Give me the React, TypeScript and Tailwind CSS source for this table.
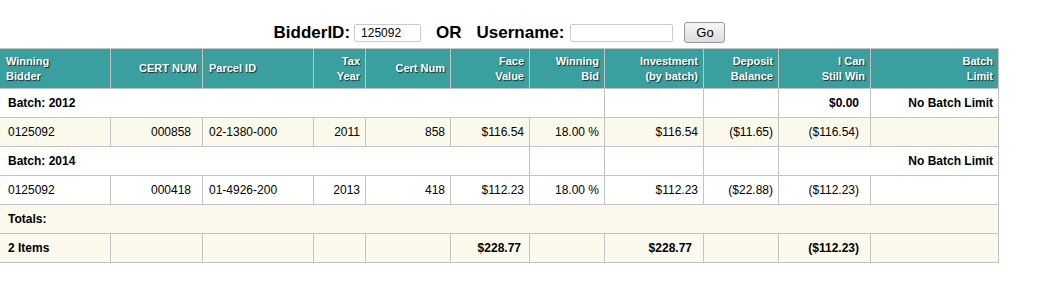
import type { ReactNode } from "react";

type CellProps = {
  children?: ReactNode;
  className?: string;
};

function Th({ children, className = "" }: CellProps) {
  return (
    <div
      className={`h-[40px] flex items-center border-r border-b border-[#c3c3c3] bg-[#3a9f9f] text-white font-bold text-[11px] leading-[15px] [text-shadow:1px_1px_1px_rgba(0,0,0,0.7)] ${className}`}
    >
      {children}
    </div>
  );
}

function Td({ children, className = "" }: CellProps) {
  return (
    <div
      className={`h-[29px] flex items-center border-r border-b border-[#c3c3c3] text-[12px] text-black ${className}`}
    >
      {children}
    </div>
  );
}

const neg = "text-[#45204a]";

export default function App() {
  return (
    <div className="min-h-screen bg-white font-['Liberation_Sans',Arial,sans-serif]">
      <div className="w-[999px]">
        {/* lookup form */}
        <div className="h-[48px] pt-[22px]">
          <div className="flex h-[21px] items-center justify-center text-black leading-[21px]">
            <span className="text-[17px] font-bold">BidderID:</span>
            <input
              defaultValue="125092"
              className="ml-[4px] w-[67px] h-[18px] border border-[#c9ccd2] rounded-[2px] pl-[6px] text-[12px] leading-[16px] outline-none"
            />
            <span className="ml-[15px] text-[17px] font-bold">OR</span>
            <span className="ml-[15px] text-[17px] font-bold">Username:</span>
            <input className="ml-[6px] w-[103px] h-[18px] border border-[#c9ccd2] rounded-[2px] pl-[6px] text-[12px] leading-[16px] outline-none" />
            <button className="ml-[11px] w-[41px] h-[21px] rounded-[3px] border border-[#9a9a9a] bg-gradient-to-b from-[#f7f7f7] to-[#dcdcdc] text-[13px] leading-none">
              Go
            </button>
          </div>
        </div>

        {/* winnings table */}
        <div className="grid grid-cols-[111px_92px_111px_52px_85px_79px_75px_99px_75px_92px_128px] border-t border-[#c3c3c3]">
          <Th className="pl-[6px]">Winning<br />Bidder</Th>
          <Th className="justify-end pr-[5px]">CERT NUM</Th>
          <Th className="pl-[6px]">Parcel ID</Th>
          <Th className="justify-end text-right pr-[5px]">Tax<br />Year</Th>
          <Th className="justify-end pr-[5px]">Cert Num</Th>
          <Th className="justify-end text-right pr-[5px]">Face<br />Value</Th>
          <Th className="justify-end text-right pr-[5px]">Winning<br />Bid</Th>
          <Th className="justify-end text-right pr-[5px]">Investment<br />(by batch)</Th>
          <Th className="justify-end text-right pr-[5px]">Deposit<br />Balance</Th>
          <Th className="justify-end text-right pr-[5px]">I Can<br />Still Win</Th>
          <Th className="justify-end text-right pr-[5px]">Batch<br />Limit</Th>

          {/* batch 2012 */}
          <Td className="col-span-7 pl-[8px] font-bold bg-white">Batch: 2012</Td>
          <Td className="bg-white" />
          <Td className="bg-white" />
          <Td className="justify-end pr-[11px] font-bold bg-white">$0.00</Td>
          <Td className="justify-end pr-[5px] font-bold bg-white">No Batch Limit</Td>

          <Td className="pl-[8px] bg-[#fbf8ec]">0125092</Td>
          <Td className="justify-end pr-[11px] bg-[#fbf8ec]">000858</Td>
          <Td className="pl-[6px] bg-[#fbf8ec]">02-1380-000</Td>
          <Td className="justify-end pr-[5px] bg-[#fbf8ec]">2011</Td>
          <Td className="justify-end pr-[5px] bg-[#fbf8ec]">858</Td>
          <Td className="justify-end pr-[5px] bg-[#fbf8ec]">$116.54</Td>
          <Td className="justify-end pr-[5px] bg-[#fbf8ec]">18.00 %</Td>
          <Td className="justify-end pr-[5px] bg-[#fbf8ec]">$116.54</Td>
          <Td className={`justify-end pr-[5px] bg-[#fbf8ec] ${neg}`}>($11.65)</Td>
          <Td className={`justify-end pr-[11px] bg-[#fbf8ec] ${neg}`}>($116.54)</Td>
          <Td className="bg-[#fbf8ec]" />

          {/* batch 2014 */}
          <Td className="col-span-6 pl-[8px] font-bold bg-white">Batch: 2014</Td>
          <Td className="bg-white" />
          <Td className="bg-white" />
          <Td className="bg-white" />
          <Td className="col-span-2 justify-end pr-[5px] font-bold bg-white">No Batch Limit</Td>

          <Td className="pl-[8px] bg-white">0125092</Td>
          <Td className="justify-end pr-[11px] bg-white">000418</Td>
          <Td className="pl-[6px] bg-white">01-4926-200</Td>
          <Td className="justify-end pr-[5px] bg-white">2013</Td>
          <Td className="justify-end pr-[5px] bg-white">418</Td>
          <Td className="justify-end pr-[5px] bg-white">$112.23</Td>
          <Td className="justify-end pr-[5px] bg-white">18.00 %</Td>
          <Td className="justify-end pr-[5px] bg-white">$112.23</Td>
          <Td className={`justify-end pr-[5px] bg-white ${neg}`}>($22.88)</Td>
          <Td className={`justify-end pr-[11px] bg-white ${neg}`}>($112.23)</Td>
          <Td className="bg-white" />

          {/* totals */}
          <Td className="col-span-11 pl-[8px] font-bold bg-[#fbf8ec]">Totals:</Td>

          <Td className="pl-[8px] font-bold bg-[#fbf8ec]">2 Items</Td>
          <Td className="bg-[#fbf8ec]" />
          <Td className="bg-[#fbf8ec]" />
          <Td className="bg-[#fbf8ec]" />
          <Td className="bg-[#fbf8ec]" />
          <Td className="justify-end pr-[8px] font-bold bg-[#fbf8ec]">$228.77</Td>
          <Td className="bg-[#fbf8ec]" />
          <Td className="justify-end pr-[11px] font-bold bg-[#fbf8ec]">$228.77</Td>
          <Td className="bg-[#fbf8ec]" />
          <Td className={`justify-end pr-[11px] font-bold bg-[#fbf8ec] ${neg}`}>($112.23)</Td>
          <Td className="bg-[#fbf8ec]" />
        </div>
      </div>
    </div>
  );
}
